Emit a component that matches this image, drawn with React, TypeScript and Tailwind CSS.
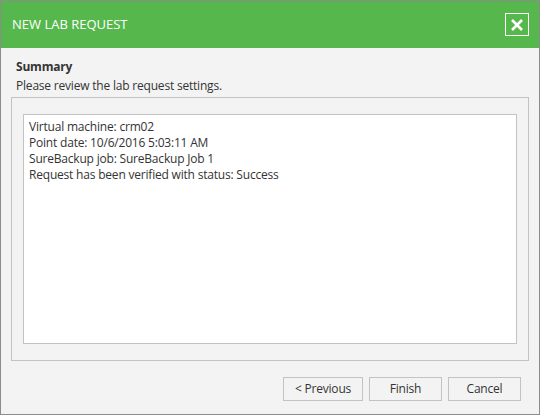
export default function App() {
  const lines = [
    'Virtual machine: crm02',
    'Point date: 10/6/2016 5:03:11 AM',
    'SureBackup job: SureBackup Job 1',
    'Request has been verified with status: Success',
  ];

  return (
    <div
      className="flex h-[415px] w-[540px] flex-col border border-[#8c8c8c] bg-[#f3f3f3] tracking-[-0.2px] text-[#333333]"
      style={{ fontFamily: '"Open Sans", "Noto Sans", sans-serif' }}
    >
      <div className="flex h-[47px] shrink-0 items-center justify-between bg-[#56b84c] pl-[11px] pr-[10px]">
        <span className="text-[13px] tracking-normal text-white">NEW LAB REQUEST</span>
        <button className="flex h-[23px] w-[24px] items-center justify-center border border-white">
          <svg width="14" height="14" viewBox="0 0 14 14">
            <path d="M2 2 L12 12 M12 2 L2 12" stroke="white" strokeWidth="2.6" />
          </svg>
        </button>
      </div>

      <div className="px-[15px] pt-[10px]">
        <p className="text-[12px] font-bold leading-[18px]">Summary</p>
        <p className="mt-[1px] text-[12px] leading-[18px]">Please review the lab request settings.</p>
      </div>

      <div className="mx-[10px] mt-[2px] h-[264px] border border-[#c3c3c3] px-[11px] pt-[16px] pb-[16px]">
        <div className="h-full border border-[#c3c3c3] bg-white px-[5px] pt-[4px]">
          {lines.map((line) => (
            <p key={line} className="text-[12px] leading-[16px]">
              {line}
            </p>
          ))}
        </div>
      </div>

      <div className="mt-[16px] flex justify-end gap-[6px] pr-[18px]">
        <button className="h-[24px] w-[80px] border border-[#c3c3c3] bg-[#f3f3f3] text-[12px]">&lt; Previous</button>
        <button className="h-[24px] w-[73px] border border-[#c3c3c3] bg-[#f3f3f3] text-[12px]">Finish</button>
        <button className="h-[24px] w-[73px] border border-[#c3c3c3] bg-[#f3f3f3] text-[12px]">Cancel</button>
      </div>
    </div>
  );
}
